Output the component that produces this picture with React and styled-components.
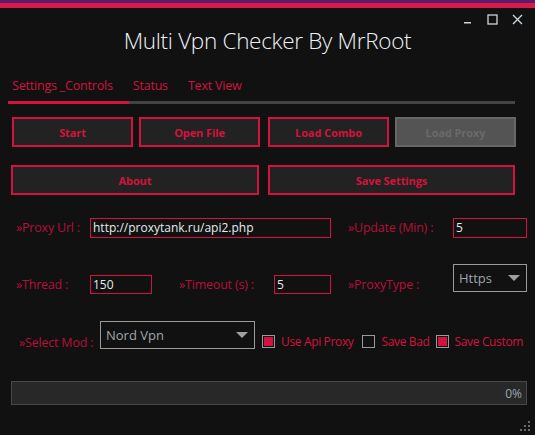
import React from "react";
import styled, { createGlobalStyle } from "styled-components";

const CRIMSON = "#d3123f";
const LABEL = "#b4103a";

const Global = createGlobalStyle`
  html, body { margin: 0; padding: 0; background: #111111; }
  body { font-family: "Open Sans", "Noto Sans", sans-serif; }
  * { box-sizing: border-box; }
`;

const Window = styled.div`
  position: relative;
  width: 535px;
  height: 435px;
  background: #111111;
  overflow: hidden;
`;

const Stripe = styled.div`
  height: ${(p) => p.h}px;
  background: ${(p) => p.c};
`;

const Controls = styled.div`
  display: flex;
  justify-content: flex-end;
  align-items: center;
  gap: 14px;
  height: 14px;
  margin-top: 4px;
  padding-right: 12px;
`;

const CtrlBtn = styled.svg`
  display: block;
  width: 11px;
  height: 11px;
`;

const Title = styled.h1`
  margin: 1px 0 0;
  height: 28px;
  text-align: center;
  font-family: "Open Sans", sans-serif;
  font-weight: 300;
  font-size: 22.5px;
  line-height: 28px;
  color: #eef2f6;
  letter-spacing: -0.3px;
`;

const TabStrip = styled.div`
  margin: 22px 20px 0 8px;
`;

const TabRow = styled.div`
  display: flex;
  gap: 20px;
  padding-left: 4px;
  height: 24px;
`;

const Tab = styled.span`
  font-size: 12.5px;
  line-height: 18px;
  color: ${CRIMSON};
  letter-spacing: -0.2px;
`;

const TabLine = styled.div`
  height: 3px;
  background: #444444;
  display: flex;
`;

const TabLineActive = styled.div`
  width: 121px;
  background: ${CRIMSON};
`;

const ButtonGrid = styled.div`
  display: flex;
  gap: ${(p) => p.gap}px;
  padding-left: ${(p) => p.pl}px;
  margin-top: ${(p) => p.mt}px;
`;

const Btn = styled.div`
  width: ${(p) => p.w}px;
  height: 30px;
  margin-left: ${(p) => p.ml || 0}px;
  display: flex;
  align-items: center;
  justify-content: center;
  background: ${(p) => (p.disabled ? "#545454" : "#222222")};
  border: 2px solid ${(p) => (p.disabled ? "#676767" : CRIMSON)};
  color: ${(p) => (p.disabled ? "#6a6a6a" : CRIMSON)};
  font-size: 11px;
  font-weight: 700;
  letter-spacing: -0.1px;
`;

const FormRow = styled.div`
  display: flex;
  align-items: ${(p) => p.align || "center"};
  height: ${(p) => p.h}px;
  margin-top: ${(p) => p.mt}px;
  padding-left: ${(p) => p.pl}px;
`;

const Label = styled.span`
  width: ${(p) => p.w}px;
  margin-left: ${(p) => p.ml || 0}px;
  margin-top: ${(p) => p.mtop || 0}px;
  flex: none;
  font-size: 12.5px;
  line-height: 18px;
  color: ${LABEL};
  white-space: nowrap;
  letter-spacing: -0.2px;
`;

const Input = styled.div`
  width: ${(p) => p.w}px;
  height: ${(p) => p.h || 20}px;
  flex: none;
  border: 1px solid ${CRIMSON};
  background: #111111;
  color: #e6eaee;
  font-size: 12px;
  line-height: 18px;
  padding-left: 2px;
  white-space: nowrap;
`;

const Select = styled.div`
  width: ${(p) => p.w}px;
  height: 28px;
  flex: none;
  margin-bottom: ${(p) => p.mb || 0}px;
  border: 1px solid #9a9a9a;
  display: flex;
  align-items: center;
  justify-content: space-between;
  padding: 0 6px 0 5px;
  color: #9ea6ae;
  font-size: 13px;
`;

const Arrow = styled.span`
  width: 0;
  height: 0;
  border-left: 6px solid transparent;
  border-right: 6px solid transparent;
  border-top: 6px solid #a0a0a0;
`;

const Check = styled.span`
  display: flex;
  align-items: center;
  margin-left: ${(p) => p.ml}px;
  margin-top: 12px;
  gap: 6px;
  font-size: 12px;
  color: ${CRIMSON};
  white-space: nowrap;
  letter-spacing: -0.35px;
`;

const Box = styled.span`
  width: 13px;
  height: 13px;
  border: 1px solid #9a9a9a;
  padding: 1px;
  display: block;
  flex: none;

  &::after {
    content: "";
    display: ${(p) => (p.checked ? "block" : "none")};
    width: 100%;
    height: 100%;
    background: ${CRIMSON};
  }
`;

const Progress = styled.div`
  margin: 32px 8px 0 11px;
  height: 24px;
  background: #282828;
  border: 1px solid #474747;
  display: flex;
  align-items: center;
  justify-content: flex-end;
  padding-right: 4px;
  color: #9aa6b2;
  font-size: 12px;
`;

const Grip = styled.svg`
  position: absolute;
  right: 3px;
  bottom: 2px;
  width: 12px;
  height: 12px;
`;

export default function App() {
  return (
    <Window>
      <Global />
      <Stripe h={3} c="#5a1d6e" />
      <Stripe h={5} c="#dc1a48" />
      <Controls>
        <CtrlBtn viewBox="0 0 11 11">
          <rect x="2" y="8" width="7" height="1.5" fill="#cfd6dc" />
        </CtrlBtn>
        <CtrlBtn viewBox="0 0 11 11">
          <rect x="1" y="1" width="9" height="9" fill="none" stroke="#cfd6dc" strokeWidth="1.3" />
        </CtrlBtn>
        <CtrlBtn viewBox="0 0 11 11">
          <path d="M1 1 L10 10 M10 1 L1 10" stroke="#cfd6dc" strokeWidth="1.4" />
        </CtrlBtn>
      </Controls>
      <Title>Multi Vpn Checker By MrRoot</Title>
      <TabStrip>
        <TabRow>
          <Tab>Settings _Controls</Tab>
          <Tab>Status</Tab>
          <Tab>Text View</Tab>
        </TabRow>
        <TabLine>
          <TabLineActive />
        </TabLine>
      </TabStrip>

      <ButtonGrid gap={6} pl={12} mt={13}>
        <Btn w={121}>Start</Btn>
        <Btn w={121}>Open File</Btn>
        <Btn w={121} ml={2}>Load Combo</Btn>
        <Btn w={121} disabled>Load Proxy</Btn>
      </ButtonGrid>
      <ButtonGrid gap={9} pl={11} mt={18}>
        <Btn w={248}>About</Btn>
        <Btn w={247}>Save Settings</Btn>
      </ButtonGrid>

      <FormRow h={20} mt={23} pl={16}>
        <Label w={74}>»Proxy Url :</Label>
        <Input w={241}>http://proxytank.ru/api2.php</Input>
        <Label w={105} ml={17}>»Update (Min) :</Label>
        <Input w={74}>5</Input>
      </FormRow>

      <FormRow h={30} mt={26} pl={16} align="flex-end">
        <Label w={74}>»Thread :</Label>
        <Input w={62} h={19}>150</Input>
        <Label w={95} ml={27}>»Timeout (s) :</Label>
        <Input w={57} h={19}>5</Input>
        <Label w={105} ml={17}>»ProxyType :</Label>
        <Select w={74} mb={2}>
          Https
          <Arrow />
        </Select>
      </FormRow>

      <FormRow h={28} mt={27} pl={19} align="flex-start">
        <Label w={81} mtop={13}>»Select Mod :</Label>
        <Select w={155}>
          Nord Vpn
          <Arrow />
        </Select>
        <Check ml={7}>
          <Box checked />
          Use Api Proxy
        </Check>
        <Check ml={9}>
          <Box />
          Save Bad
        </Check>
        <Check ml={6}>
          <Box checked />
          Save Custom
        </Check>
      </FormRow>

      <Progress>0%</Progress>

      <Grip viewBox="0 0 12 12">
        {[[8, 0], [4, 4], [8, 4], [0, 8], [4, 8], [8, 8]].map(([x, y]) => (
          <rect key={`${x}-${y}`} x={x} y={y} width="2" height="2" fill="#6a6a6a" />
        ))}
      </Grip>
    </Window>
  );
}
